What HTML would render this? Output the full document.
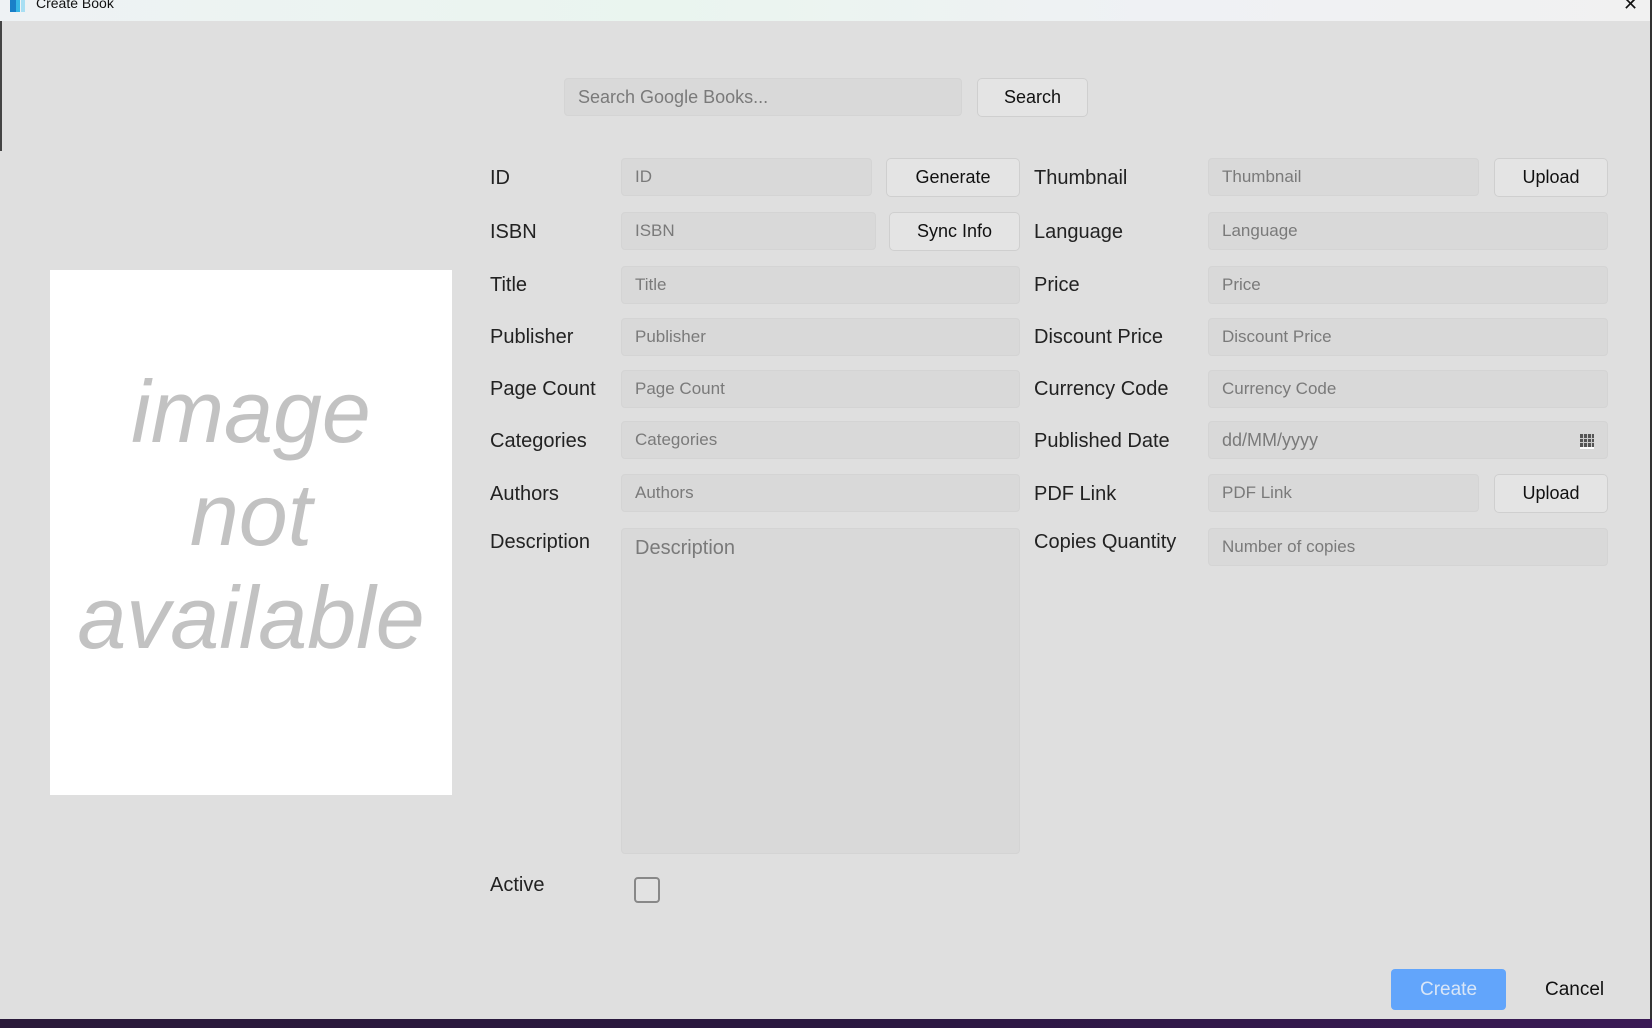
<!DOCTYPE html>
<html><head><meta charset="utf-8"><style>
*{box-sizing:border-box;margin:0;padding:0}
body{width:1652px;height:1028px;position:relative;overflow:hidden;background:#dfdfdf;font-family:"Liberation Sans",sans-serif}
.a{position:absolute}
.tb{left:0;top:0;width:1652px;height:21px;background:linear-gradient(90deg,#eef2f4,#eaf5ef 40%,#eff1f4 70%,#f1f1f1)}
.lbl{position:absolute;font-size:20px;color:#222;line-height:24px}
.in{position:absolute;height:38px;background:#d9d9d9;border:1px solid #d4d4d4;border-radius:4px;color:#7a7a7a;font-size:17px;line-height:36px;padding-left:13px}
.bt{position:absolute;height:39px;background:#e4e4e4;border:1px solid #cfcfcf;border-radius:5px;color:#111;font-size:18px;line-height:37px;text-align:center}
.img{left:50px;top:270px;width:402px;height:525px;background:#fff;text-align:center;font-style:italic;color:#c2c2c2;font-size:88px}
</style></head><body>
<div class="a tb"></div>
<div class="a" style="left:10px;top:0;width:6px;height:12px;background:#1a7fc8"></div>
<div class="a" style="left:16px;top:0;width:4px;height:12px;background:#38b6e6"></div>
<div class="a" style="left:21px;top:0;width:4px;height:12px;background:#a8dff3"></div>
<div class="a" style="left:36px;top:-5px;font-size:14px;color:#111">Create Book</div>
<div class="a" style="left:1623px;top:-6px;font-size:18px;color:#111">✕</div>
<div class="a" style="left:0;top:21px;width:2px;height:130px;background:#444"></div>
<div class="a" style="left:1650px;top:0;width:2px;height:1028px;background:#333"></div>
<div class="a" style="left:0;top:1019px;width:1652px;height:9px;background:linear-gradient(90deg,#2a1a3a,#2a1840,#3a1a55)"></div>

<div class="in" style="left:564px;top:78px;width:398px;height:38px;font-size:18px">Search Google Books...</div>
<div class="bt" style="left:977px;top:78px;width:111px">Search</div>

<div class="a img"><div style="position:absolute;top:0;left:0;right:0;padding-top:90px;line-height:103px">image<br>not<br>available</div></div>

<div class="lbl" style="left:490px;top:166px">ID</div>
<div class="in" style="left:621px;top:158px;width:251px">ID</div>
<div class="bt" style="left:886px;top:158px;width:134px">Generate</div>
<div class="lbl" style="left:490px;top:220px">ISBN</div>
<div class="in" style="left:621px;top:212px;width:255px">ISBN</div>
<div class="bt" style="left:889px;top:212px;width:131px">Sync Info</div>
<div class="lbl" style="left:490px;top:273px">Title</div>
<div class="in" style="left:621px;top:266px;width:399px">Title</div>
<div class="lbl" style="left:490px;top:325px">Publisher</div>
<div class="in" style="left:621px;top:318px;width:399px">Publisher</div>
<div class="lbl" style="left:490px;top:377px">Page Count</div>
<div class="in" style="left:621px;top:370px;width:399px">Page Count</div>
<div class="lbl" style="left:490px;top:429px">Categories</div>
<div class="in" style="left:621px;top:421px;width:399px">Categories</div>
<div class="lbl" style="left:490px;top:482px">Authors</div>
<div class="in" style="left:621px;top:474px;width:399px">Authors</div>
<div class="lbl" style="left:490px;top:530px">Description</div>
<div class="in" style="left:621px;top:528px;width:399px;height:326px;font-size:20px;line-height:38px">Description</div>
<div class="lbl" style="left:490px;top:873px">Active</div>
<div class="a" style="left:634px;top:877px;width:26px;height:26px;border:2px solid #888;border-radius:4px;background:#e2e2e2"></div>

<div class="lbl" style="left:1034px;top:166px">Thumbnail</div>
<div class="in" style="left:1208px;top:158px;width:271px">Thumbnail</div>
<div class="bt" style="left:1494px;top:158px;width:114px">Upload</div>
<div class="lbl" style="left:1034px;top:220px">Language</div>
<div class="in" style="left:1208px;top:212px;width:400px">Language</div>
<div class="lbl" style="left:1034px;top:273px">Price</div>
<div class="in" style="left:1208px;top:266px;width:400px">Price</div>
<div class="lbl" style="left:1034px;top:325px">Discount Price</div>
<div class="in" style="left:1208px;top:318px;width:400px">Discount Price</div>
<div class="lbl" style="left:1034px;top:377px">Currency Code</div>
<div class="in" style="left:1208px;top:370px;width:400px">Currency Code</div>
<div class="lbl" style="left:1034px;top:429px">Published Date</div>
<div class="in" style="left:1208px;top:421px;width:400px;font-size:18px">dd/MM/yyyy</div>
<div class="a" style="left:1580px;top:434px;width:14px;height:15px;border-bottom:2px solid #fff;background-color:#555;background-image:linear-gradient(90deg,transparent 3px,#ccc 3px,#ccc 4px,transparent 4px,transparent 7px,#ccc 7px,#ccc 8px,transparent 8px,transparent 11px,#ccc 11px,#ccc 12px,transparent 12px),linear-gradient(180deg,transparent 4px,#ccc 4px,#ccc 5px,transparent 5px,transparent 8px,#ccc 8px,#ccc 9px,transparent 9px)"></div>
<div class="lbl" style="left:1034px;top:482px">PDF Link</div>
<div class="in" style="left:1208px;top:474px;width:271px">PDF Link</div>
<div class="bt" style="left:1494px;top:474px;width:114px">Upload</div>
<div class="lbl" style="left:1034px;top:530px">Copies Quantity</div>
<div class="in" style="left:1208px;top:528px;width:400px">Number of copies</div>

<div class="a" style="left:1391px;top:969px;width:115px;height:41px;background:#62a5fb;border-radius:4px;color:#d9e6f7;font-size:19px;line-height:41px;text-align:center">Create</div>
<div class="a" style="left:1545px;top:979px;font-size:19px;color:#111">Cancel</div>
</body></html>
